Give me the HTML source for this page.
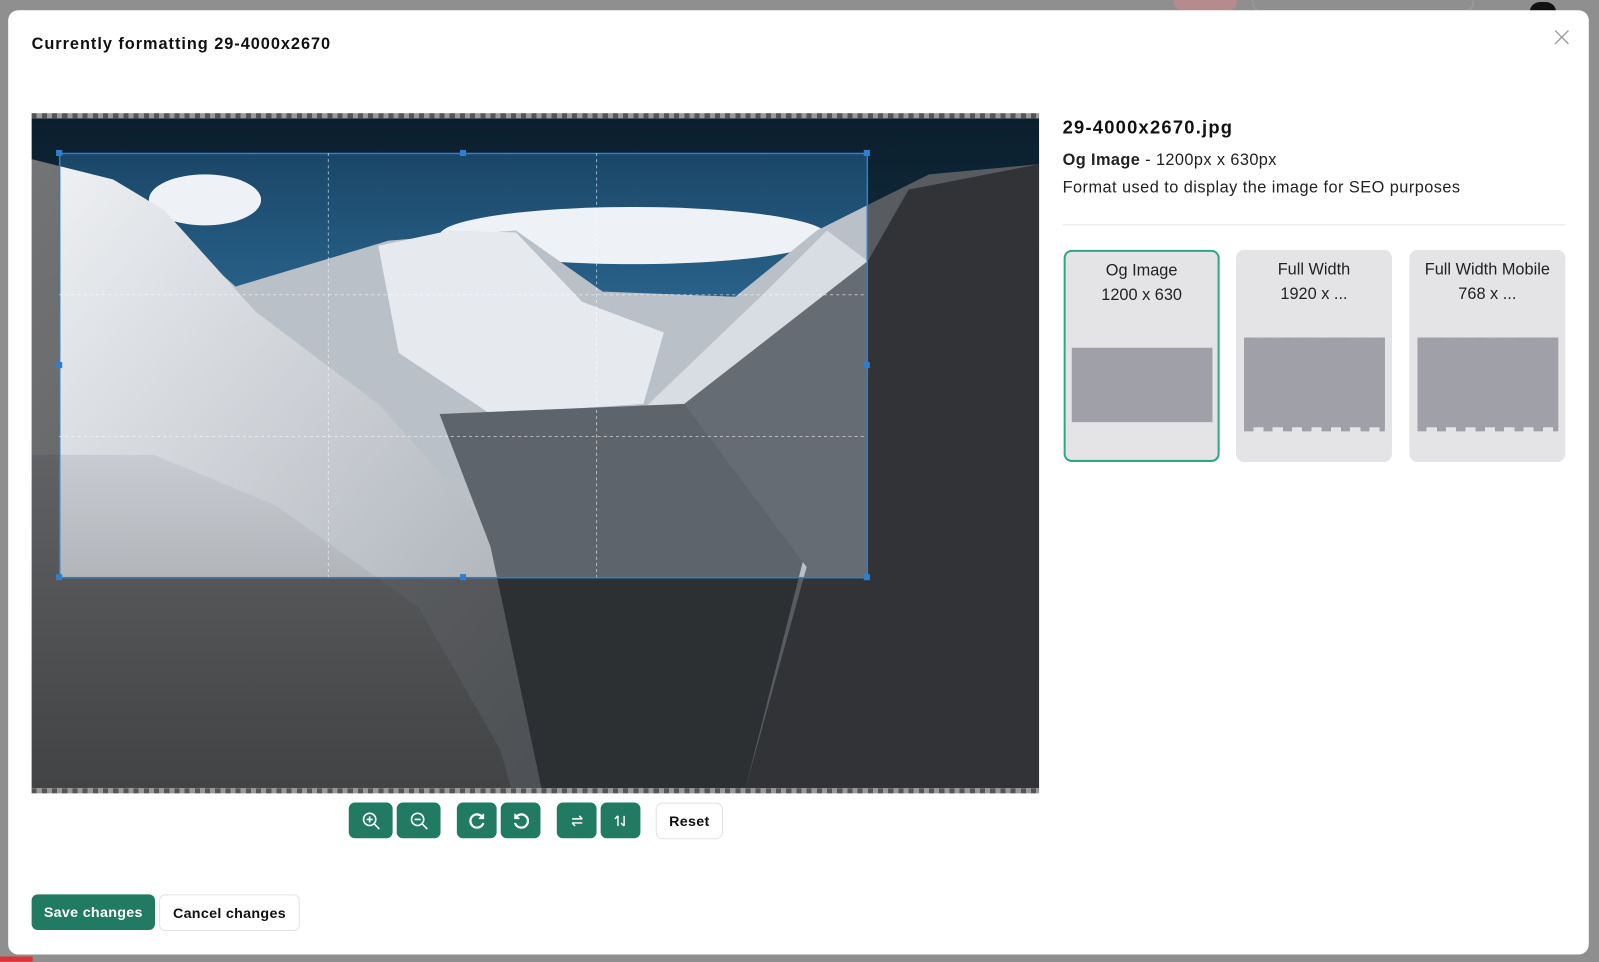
<!DOCTYPE html>
<html><head><meta charset="utf-8"><style>
html,body{margin:0;padding:0;width:1599px;height:962px;overflow:hidden;background:#8f8f8f;font-family:"Liberation Sans",Arial,sans-serif}
#s{position:absolute;left:0;top:0;width:1568px;height:943px;transform:scale(1.01977);transform-origin:0 0}
.abs{position:absolute}
.modal{left:8px;top:10px;width:1550px;height:926px;background:#fff;border-radius:10px}
.title{left:31px;top:35px;font-weight:bold;font-size:16px;color:#111;letter-spacing:0.95px}
.gb{position:absolute;top:787px;height:35px;background:#217b63;border-radius:6px;display:flex;align-items:center;justify-content:center}
.card{position:absolute;top:245px;width:153px;height:208px;background:#e4e4e7;border-radius:8px;box-sizing:border-box;text-align:center;font-size:16px;color:#222;line-height:24px;padding-top:8px}
.chk{background:repeating-linear-gradient(90deg,#555 0 5px,#999 5px 10px)}
</style></head><body>
<div id="s">
<div class="abs" style="left:1151px;top:0;width:62px;height:10px;background:#b58b90;border-radius:0 0 8px 8px"></div>
<div class="abs" style="left:1228px;top:0;width:215px;height:10px;border:1px solid #a0a0a0;border-top:none;border-radius:0 0 8px 8px"></div>
<div class="abs" style="left:1500px;top:2px;width:26px;height:10px;background:#111;border-radius:13px 13px 0 0"></div>
<div class="abs" style="left:0;top:938px;width:32px;height:5px;background:#d33"></div>
<div class="abs modal"></div>
<div class="abs title">Currently formatting 29-4000x2670</div>
<svg class="abs" style="left:1524px;top:29px" width="15" height="15" viewBox="0 0 15 15"><path d="M1 1L14 14M14 1L1 14" stroke="#999" stroke-width="1.3"/></svg>

<div class="abs chk" style="left:31px;top:111px;width:988px;height:5px"></div>
<div class="abs chk" style="left:31px;top:773px;width:988px;height:5px"></div>
<svg class="abs" style="left:31px;top:116px" width="988" height="657" viewBox="0 0 988 657">
<defs>
<linearGradient id="sky" x1="0" y1="0" x2="0" y2="1"><stop offset="0" stop-color="#16405f"/><stop offset=".5" stop-color="#3a7fb0"/><stop offset="1" stop-color="#5a9ac6"/></linearGradient>
<linearGradient id="lm" x1="0" y1="0" x2="1" y2="1"><stop offset="0" stop-color="#f0f2f5"/><stop offset="1" stop-color="#a0a6ae"/></linearGradient>
<linearGradient id="bm" x1="0" y1="0" x2="0" y2="1"><stop offset="0" stop-color="#c8ccd2"/><stop offset="1" stop-color="#8a8c8e"/></linearGradient>
</defs>
<rect width="988" height="657" fill="url(#sky)"/>
<ellipse cx="590" cy="115" rx="190" ry="28" fill="#eef2f6"/>
<ellipse cx="170" cy="80" rx="55" ry="25" fill="#eef2f6"/>
<polygon points="0,40 60,70 120,95 200,165 350,120 475,110 560,170 690,175 770,110 830,80 880,55 988,45 988,657 0,657" fill="#b9c0c8"/>
<polygon points="340,125 410,110 475,112 540,180 620,210 600,280 450,290 360,230" fill="#e6eaee"/>
<polygon points="720,170 780,110 820,140 760,250 660,290 600,285" fill="#d8dde3"/>
<polygon points="0,40 80,60 130,90 220,190 340,280 430,380 480,460 520,657 0,657" fill="url(#lm)"/>
<polygon points="400,290 640,280 700,330 760,420 700,657 500,657 450,420" fill="#5e646c"/>
<polygon points="640,280 820,140 860,70 988,45 988,657 700,657 760,440" fill="#666c74"/>
<polygon points="0,330 120,330 240,380 380,480 460,620 470,657 0,657" fill="url(#bm)"/>
<path fill="rgba(0,0,0,0.52)" fill-rule="evenodd" d="M0 0H988V657H0Z M27 34H819V450H27Z"/>
<rect x="27.5" y="34.5" width="792" height="416" fill="none" stroke="#2f7fd0" stroke-width="1.5"/>
<path d="M291 34V450M554 34V450M27 173H819M27 312H819" stroke="rgba(255,255,255,.55)" stroke-dasharray="3 3" stroke-width="1"/>
<g fill="#2f7fd0"><rect x="24" y="31" width="6" height="6"/><rect x="816" y="31" width="6" height="6"/><rect x="24" y="447" width="6" height="6"/><rect x="816" y="447" width="6" height="6"/><rect x="420" y="31" width="6" height="6"/><rect x="420" y="447" width="6" height="6"/><rect x="24" y="239" width="6" height="6"/><rect x="816" y="239" width="6" height="6"/></g>
</svg>

<div class="gb" style="left:342px;width:43px"><svg width="20" height="20" viewBox="0 0 20 20" fill="none" stroke="#fff" stroke-width="1.6"><circle cx="8.5" cy="8.5" r="6"/><path d="M13 13L18 18M8.5 5.5V11.5M5.5 8.5H11.5"/></svg></div>
<div class="gb" style="left:389px;width:43px"><svg width="20" height="20" viewBox="0 0 20 20" fill="none" stroke="#fff" stroke-width="1.6"><circle cx="8.5" cy="8.5" r="6"/><path d="M13 13L18 18M5.5 8.5H11.5"/></svg></div>
<div class="gb" style="left:448px;width:39px"><svg width="18" height="18" viewBox="0 0 18 18" fill="none" stroke="#fff" stroke-width="2.2"><path d="M14.5 6A6.5 6.5 0 1 0 15 11"/><path d="M15 2V6.5H10.5" fill="#fff" stroke-width="1.5"/></svg></div>
<div class="gb" style="left:491px;width:39px"><svg width="18" height="18" viewBox="0 0 18 18" fill="none" stroke="#fff" stroke-width="2.2"><path d="M3.5 6A6.5 6.5 0 1 1 3 11"/><path d="M3 2V6.5H7.5" fill="#fff" stroke-width="1.5"/></svg></div>
<div class="gb" style="left:546px;width:39px"><svg width="16" height="16" viewBox="0 0 16 16" fill="none" stroke="#fff" stroke-width="1.4"><path d="M3 6H13M10 3L13 6M13 10H3M6 13L3 10"/></svg></div>
<div class="gb" style="left:589px;width:39px"><svg width="16" height="16" viewBox="0 0 16 16" fill="none" stroke="#fff" stroke-width="1.4"><path d="M5 13V3M2 6L5 3M11 3V13M8 10L11 13"/></svg></div>
<div class="abs" style="left:643px;top:787px;width:64px;height:34px;border:1px solid #e2e2e2;border-radius:7px;font-weight:bold;font-size:14px;line-height:34px;text-align:center;color:#111;letter-spacing:0.3px">Reset</div>

<div class="abs" style="left:1042px;top:115px;font-weight:bold;font-size:18px;color:#111;letter-spacing:1.2px">29-4000x2670.jpg</div>
<div class="abs" style="left:1042px;top:149px;font-size:16px;color:#222;letter-spacing:0.4px"><b>Og Image</b> - 1200px x 630px</div>
<div class="abs" style="left:1042px;top:176px;font-size:16px;color:#222;letter-spacing:0.45px">Format used to display the image for SEO purposes</div>
<div class="abs" style="left:1042px;top:220px;width:493px;height:1px;background:#e3e3e3"></div>
<div class="card" style="left:1043px;border:2px solid #2ea884;padding-top:7px">Og Image<br>1200 x 630<div style="position:absolute;left:6px;top:94px;width:138px;height:73px;background:#a0a0a8"></div></div>
<div class="card" style="left:1212px">Full Width<br>1920 x ...<div style="position:absolute;left:8px;top:86px;width:138px;height:92px;background:linear-gradient(#a0a0a8,#a0a0a8) 0 0/100% 88px no-repeat,repeating-linear-gradient(90deg,#a0a0a8 0 9px,#e4e4e7 9px 19px)"></div></div>
<div class="card" style="left:1382px">Full Width Mobile<br>768 x ...<div style="position:absolute;left:8px;top:86px;width:138px;height:92px;background:linear-gradient(#a0a0a8,#a0a0a8) 0 0/100% 88px no-repeat,repeating-linear-gradient(90deg,#a0a0a8 0 9px,#e4e4e7 9px 19px)"></div></div>

<div class="abs" style="left:31px;top:877px;width:121px;height:35px;background:#217b63;border-radius:6px;color:#fff;font-weight:bold;font-size:14px;line-height:35px;text-align:center;letter-spacing:0.3px">Save changes</div>
<div class="abs" style="left:156px;top:877px;width:136px;height:34px;border:1px solid #e2e2e2;border-radius:6px;color:#111;font-weight:bold;font-size:14px;line-height:34px;text-align:center;letter-spacing:0.3px">Cancel changes</div>
</div>
</body></html>
